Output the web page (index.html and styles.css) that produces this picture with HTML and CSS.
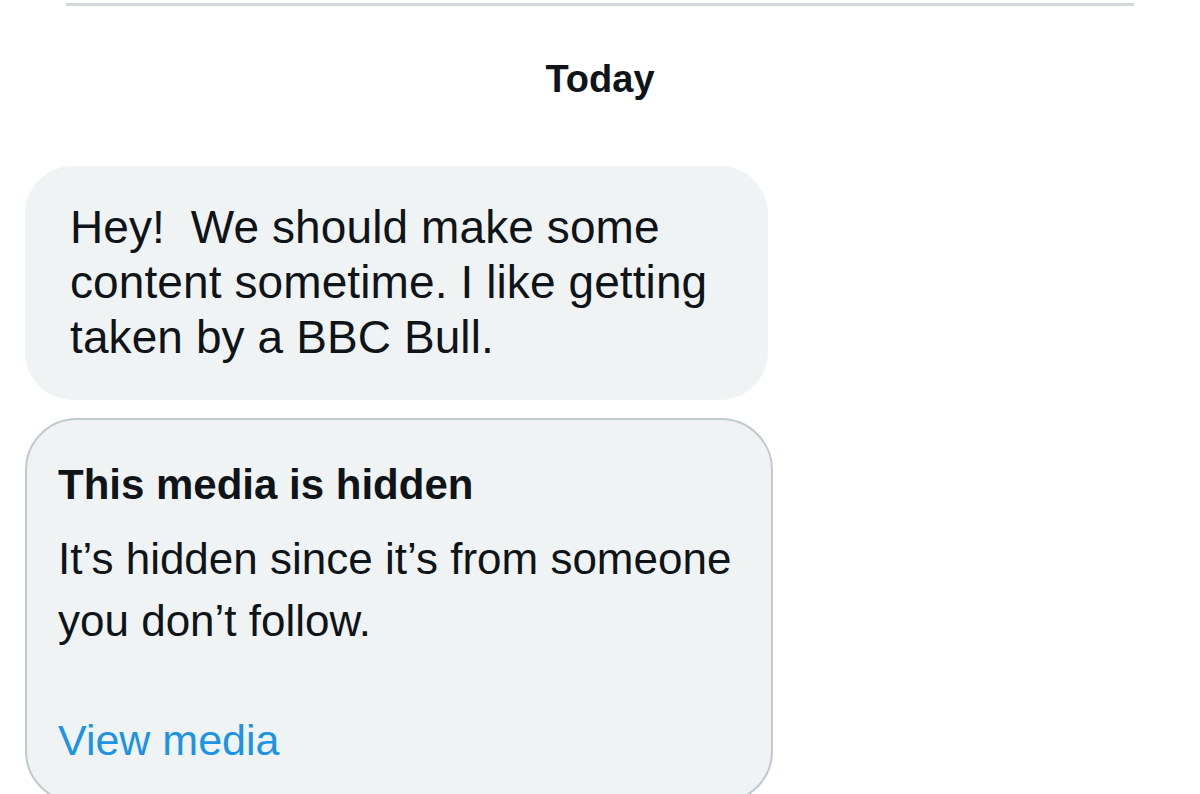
FILE: index.html
```html
<!DOCTYPE html>
<html lang="en">
<head>
<meta charset="utf-8">
<title>Messages</title>
<link rel="stylesheet" href="styles.css">
</head>
<body>
  <div class="divider"></div>
  <div class="date">Today</div>
  <div class="thread">
    <div class="bubble">Hey!&nbsp; We should make some content sometime. I like getting taken by a BBC Bull.</div>
    <div class="media-card">
      <div class="media-title">This media is hidden</div>
      <div class="media-text">It’s hidden since it’s from someone you don’t follow.</div>
      <a class="media-link" href="#">View media</a>
    </div>
  </div>
</body>
</html>
```
FILE: styles.css
```css
html, body {
  margin: 0;
  padding: 0;
  background: #ffffff;
  overflow: hidden;
}
body {
  font-family: "Liberation Sans", Arial, sans-serif;
  color: #0f1419;
  width: 1200px;
  height: 794px;
}
.divider {
  margin: 3px 66px 0;
  height: 3px;
  background: #d3d9dc;
}
.date {
  margin-top: 50px;
  text-align: center;
  font-weight: 700;
  font-size: 38px;
  line-height: 46px;
}
.thread {
  padding-left: 25px;
  display: flex;
  flex-direction: column;
  align-items: flex-start;
  gap: 18px;
  margin-top: 64px;
}
.bubble {
  box-sizing: border-box;
  width: 743px;
  background: #eff3f4;
  border-radius: 48px;
  padding: 34px 36px 35px 45px;
  font-size: 46px;
  line-height: 55px;
  letter-spacing: 0.1px;
}
.media-card {
  box-sizing: border-box;
  width: 748px;
  background: #eff3f4;
  border: 2px solid #bfcacf;
  border-radius: 52px;
  padding: 40px 30px 30px 31px;
  display: flex;
  flex-direction: column;
  align-items: flex-start;
}
.media-title {
  font-weight: 700;
  font-size: 42px;
  line-height: 50px;
}
.media-text {
  margin-top: 18px;
  font-size: 44px;
  line-height: 62px;
}
.media-link {
  margin-top: 57px;
  font-size: 43px;
  line-height: 62px;
  color: #1d93e3;
  text-decoration: none;
}
```
